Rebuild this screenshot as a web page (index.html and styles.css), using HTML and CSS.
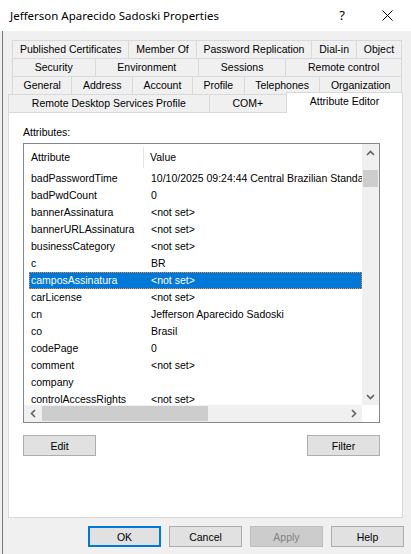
FILE: index.html
```html
<!DOCTYPE html>
<html>
<head>
<meta charset="utf-8">
<link rel="stylesheet" href="styles.css">
</head>
<body>
<div class="titlebar">
  <span class="title">Jefferson Aparecido Sadoski Properties</span>
  <span class="help">?</span>
  <svg class="close" width="11" height="11" viewBox="0 0 11 11"><path d="M0.5 0.5 L10.5 10.5 M10.5 0.5 L0.5 10.5" stroke="#000" stroke-width="1" fill="none"/></svg>
</div>
<div class="client">
  <div class="tabs">
    <div class="tabrow back">
      <div class="tab">Published Certificates</div>
      <div class="tab">Member Of</div>
      <div class="tab">Password Replication</div>
      <div class="tab">Dial-in</div>
      <div class="tab">Object</div>
    </div>
    <div class="tabrow back">
      <div class="tab">Security</div>
      <div class="tab">Environment</div>
      <div class="tab">Sessions</div>
      <div class="tab">Remote control</div>
    </div>
    <div class="tabrow back">
      <div class="tab">General</div>
      <div class="tab">Address</div>
      <div class="tab">Account</div>
      <div class="tab">Profile</div>
      <div class="tab">Telephones</div>
      <div class="tab">Organization</div>
    </div>
    <div class="tabrow front">
      <div class="tab">Remote Desktop Services Profile</div>
      <div class="tab">COM+</div>
      <div class="tab active">Attribute Editor</div>
    </div>
  </div>
  <div class="panel">
    <div class="label">Attributes:</div>
    <div class="listbox">
      <div class="listview">
        <div class="lv-header">
          <div class="h1">Attribute</div>
          <div class="h2">Value</div>
        </div>
        <div class="lv-row"><span class="c1">badPasswordTime</span><span class="c2">10/10/2025 09:24:44 Central Brazilian Standard Time</span></div>
        <div class="lv-row"><span class="c1">badPwdCount</span><span class="c2">0</span></div>
        <div class="lv-row"><span class="c1">bannerAssinatura</span><span class="c2">&lt;not set&gt;</span></div>
        <div class="lv-row"><span class="c1">bannerURLAssinatura</span><span class="c2">&lt;not set&gt;</span></div>
        <div class="lv-row"><span class="c1">businessCategory</span><span class="c2">&lt;not set&gt;</span></div>
        <div class="lv-row"><span class="c1">c</span><span class="c2">BR</span></div>
        <div class="lv-row selected"><span class="c1">camposAssinatura</span><span class="c2">&lt;not set&gt;</span></div>
        <div class="lv-row"><span class="c1">carLicense</span><span class="c2">&lt;not set&gt;</span></div>
        <div class="lv-row"><span class="c1">cn</span><span class="c2">Jefferson Aparecido Sadoski</span></div>
        <div class="lv-row"><span class="c1">co</span><span class="c2">Brasil</span></div>
        <div class="lv-row"><span class="c1">codePage</span><span class="c2">0</span></div>
        <div class="lv-row"><span class="c1">comment</span><span class="c2">&lt;not set&gt;</span></div>
        <div class="lv-row"><span class="c1">company</span><span class="c2"></span></div>
        <div class="lv-row"><span class="c1">controlAccessRights</span><span class="c2">&lt;not set&gt;</span></div>
      </div>
      <div class="vscroll">
        <div class="sbtn"><svg width="9" height="6" viewBox="0 0 9 6"><polyline points="1,5 4.5,1.5 8,5" fill="none" stroke="#606060" stroke-width="1.6"/></svg></div>
        <div class="vtrack"><div class="vthumb"></div></div>
        <div class="sbtn"><svg width="9" height="6" viewBox="0 0 9 6"><polyline points="1,1 4.5,4.5 8,1" fill="none" stroke="#606060" stroke-width="1.6"/></svg></div>
      </div>
      <div class="hscroll">
        <div class="sbtn"><svg width="6" height="9" viewBox="0 0 6 9"><polyline points="5,1 1.5,4.5 5,8" fill="none" stroke="#606060" stroke-width="1.6"/></svg></div>
        <div class="htrack"><div class="hthumb"></div></div>
        <div class="sbtn"><svg width="6" height="9" viewBox="0 0 6 9"><polyline points="1,1 4.5,4.5 1,8" fill="none" stroke="#606060" stroke-width="1.6"/></svg></div>
      </div>
      <div class="corner"></div>
    </div>
    <div class="panel-buttons">
      <button class="btn">Edit</button>
      <button class="btn">Filter</button>
    </div>
  </div>
  <div class="dialog-buttons">
    <button class="btn default">OK</button>
    <button class="btn">Cancel</button>
    <button class="btn disabled">Apply</button>
    <button class="btn">Help</button>
  </div>
</div>
</body>
</html>
```
FILE: styles.css
```css
html, body {
  margin: 0;
  padding: 0;
}
body {
  width: 411px;
  height: 554px;
  overflow: hidden;
  background: #f0f0f0;
  font-family: "Liberation Sans", Arial, sans-serif;
  font-size: 10.5px;
  color: #000;
}

.titlebar {
  height: 31px;
  background: #fff;
  display: flex;
  align-items: center;
  font-family: "Noto Sans", sans-serif;
  font-size: 11.5px;
}
.title {
  flex: 1;
  padding-left: 10px;
  padding-bottom: 1px;
}
.help {
  font-size: 13px;
  margin-right: 37px;
  padding-bottom: 1px;
}
.close {
  margin-right: 18px;
}

.client {
  margin-left: 2px;
  border-left: 1px solid #7a7a7a;
  padding: 9px 0 0 5px;
  height: 523px;
  box-sizing: border-box;
}

.tabs {
  width: 395px;
}
.tabrow {
  display: flex;
  height: 18px;
}
.tabrow.back {
  margin: 0 1px 0 4px;
}
.tab {
  flex: 1 1 auto;
  box-sizing: border-box;
  height: 18px;
  border-top: 1px solid #d9d9d9;
  border-left: 1px solid #d9d9d9;
  line-height: 17px;
  text-align: center;
  white-space: nowrap;
  padding: 0 4px;
}
.tab:last-child {
  border-right: 1px solid #d9d9d9;
}
.tab.active {
  background: #fff;
  height: 21px;
  margin-top: -2px;
  position: relative;
  z-index: 1;
}

.panel {
  width: 395px;
  height: 406px;
  box-sizing: border-box;
  border: 1px solid #d9d9d9;
  background: #fff;
  padding: 13px 22px 0 14px;
}
.label {
  line-height: 13px;
  height: 13px;
  margin-bottom: 4px;
}

.listbox {
  width: 357px;
  height: 280px;
  box-sizing: border-box;
  border: 1px solid #828790;
  display: grid;
  grid-template-columns: 338px 17px;
  grid-template-rows: 261px 17px;
  background: #fff;
}
.listview {
  overflow: hidden;
}
.lv-header {
  display: flex;
  height: 26px;
  align-items: center;
  padding-top: 1px;
  box-sizing: border-box;
}
.h1 {
  width: 120px;
  box-sizing: border-box;
  padding-left: 7px;
  border-right: 1px solid #e5e5e5;
  height: 21px;
  line-height: 21px;
}
.h2 {
  padding-left: 6px;
  line-height: 21px;
}
.lv-row {
  display: flex;
  height: 17px;
  line-height: 17px;
  margin-left: 5px;
  white-space: nowrap;
  overflow: hidden;
}
.c1 {
  width: 120px;
  flex: none;
  padding-left: 2px;
  box-sizing: border-box;
}
.c2 {
  padding-left: 2px;
}
.lv-row.selected {
  background: #0078d7;
  color: #fff;
  outline: 1px dotted #ff8728;
  outline-offset: -1px;
}

.vscroll {
  background: #f0f0f0;
  display: flex;
  flex-direction: column;
}
.sbtn {
  width: 17px;
  height: 17px;
  display: flex;
  align-items: center;
  justify-content: center;
  flex: none;
}
.vtrack {
  flex: 1;
}
.vthumb {
  margin: 9px 1px 0 1px;
  height: 17px;
  background: #cdcdcd;
}
.hscroll {
  background: #f0f0f0;
  display: flex;
}
.htrack {
  flex: 1;
  display: flex;
  align-items: center;
}
.hthumb {
  margin-left: 1px;
  width: 166px;
  height: 15px;
  background: #cdcdcd;
}
.corner {
  background: #fff;
}

.btn {
  width: 73px;
  height: 21px;
  box-sizing: border-box;
  border: 1px solid #adadad;
  background: #e1e1e1;
  font-family: "Liberation Sans", Arial, sans-serif;
  font-size: 10.5px;
  color: #000;
  padding: 0;
  margin: 0;
}
.btn.default {
  border: 2px solid #0078d7;
}
.btn.disabled {
  background: #cccccc;
  border-color: #bfbfbf;
  color: #838383;
}
.panel-buttons {
  display: flex;
  justify-content: space-between;
  margin-top: 12px;
}
.dialog-buttons {
  display: flex;
  justify-content: flex-end;
  gap: 8px;
  margin-top: 8px;
  padding-right: 7px;
}
```
